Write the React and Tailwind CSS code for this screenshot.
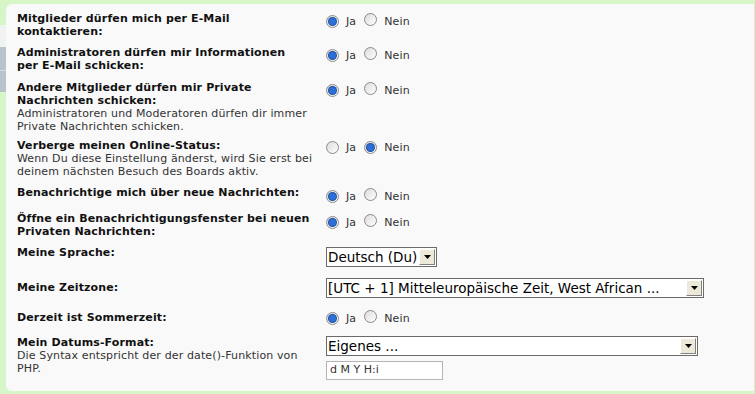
import React from 'react';

const font = { fontFamily: '"DejaVu Sans", Verdana, sans-serif' };

function Radio({ checked }) {
  return (
    <span className="relative inline-flex h-[13px] w-[13px] items-center justify-center rounded-full border border-[#8a8a8a] bg-gradient-to-br from-[#dcdcdc] to-[#ffffff]">
      {checked && <span className="h-[7px] w-[7px] rounded-full bg-[#2c6fd8] ring-1 ring-[#1d4f9e]" />}
    </span>
  );
}

function YesNo({ yes }) {
  return (
    <div className="flex items-center text-[11px] leading-[13px] tracking-[0.13px] text-[#333]">
      <Radio checked={yes} />
      <span className="ml-[7px]">Ja</span>
      <span className="ml-[8px]"><Radio checked={!yes} /></span>
      <span className="ml-[7px]">Nein</span>
    </div>
  );
}

function Select({ value, width }) {
  return (
    <div className={`flex h-[20px] items-center border border-[#6b6b6b] bg-white ${width}`}>
      <span className="flex-1 truncate pl-[1px] text-[13.5px] leading-[16px] text-black">{value}</span>
      <span className="mr-[1px] flex h-[16px] w-[16px] items-center justify-center border border-t-white border-l-white border-r-[#808080] border-b-[#808080] bg-[#ece9d8]">
        <svg width="7" height="4" viewBox="0 0 7 4"><path d="M0 0h7L3.5 4z" fill="#000" /></svg>
      </span>
    </div>
  );
}

const rows = [
  { h: 'h-[34px]', label: ['Mitglieder dürfen mich per E-Mail', 'kontaktieren:'], right: <YesNo yes />, mt: 'mt-[1px]' },
  { h: 'h-[35px]', label: ['Administratoren dürfen mir Informationen', 'per E-Mail schicken:'], right: <YesNo yes />, mt: 'mt-[1px]' },
  {
    h: 'h-[58px]',
    label: ['Andere Mitglieder dürfen mir Private', 'Nachrichten schicken:'],
    desc: ['Administratoren und Moderatoren dürfen dir immer', 'Private Nachrichten schicken.'],
    right: <YesNo yes />,
    mt: 'mt-[1px]',
  },
  {
    h: 'h-[47px]',
    label: ['Verberge meinen Online-Status:'],
    desc: ['Wenn Du diese Einstellung änderst, wird Sie erst bei', 'deinem nächsten Besuch des Boards aktiv.'],
    right: <YesNo yes={false} />,
    mt: 'mt-[2px]',
  },
  { h: 'h-[26px]', label: ['Benachrichtige mich über neue Nachrichten:'], right: <YesNo yes />, mt: 'mt-[2px]' },
  { h: 'h-[34px]', label: ['Öffne ein Benachrichtigungsfenster bei neuen', 'Privaten Nachrichten:'], right: <YesNo yes />, mt: 'mt-[2px]' },
  { h: 'h-[35px]', label: ['Meine Sprache:'], right: <Select value="Deutsch (Du)" width="w-[111px]" />, mt: 'mt-[1px]' },
  {
    h: 'h-[30px]',
    label: ['Meine Zeitzone:'],
    right: <Select value="[UTC + 1] Mitteleuropäische Zeit, West African ..." width="w-[378px]" />,
    mt: '-mt-[3px]',
  },
  { h: 'h-[25px]', label: ['Derzeit ist Sommerzeit:'], right: <YesNo yes />, mt: '-mt-[1px]' },
  {
    h: 'h-[52px]',
    label: ['Mein Datums-Format:'],
    desc: ['Die Syntax entspricht der der date()-Funktion von', 'PHP.'],
    right: (
      <div className="flex flex-col gap-[5px]">
        <Select value="Eigenes ..." width="w-[372px]" />
        <div className="flex h-[19px] w-[117px] items-center border border-[#b5b5b5] bg-white pl-[3px] text-[11px] text-[#333]">
          d M Y H:i
        </div>
      </div>
    ),
    mt: 'mt-[0px]',
  },
];

export default function App() {
  return (
    <div className="flex h-[394px] w-[755px] overflow-hidden bg-[#d7f6c7]" style={font}>
      <div className="flex w-[6px] shrink-0 flex-col pt-[25px]">
        <div className="h-[22px] bg-[#f1f3f1]" />
        <div className="h-[23px] bg-[#b7c4cc]" />
        <div className="h-[1px] bg-[#d4dcd9]" />
        <div className="h-[21px] bg-[#b7c4cc]" />
      </div>
      <div className="mt-[4px] mb-[3px] mr-[1px] flex-1 rounded-l-[6px] bg-[#f9f9f9] pt-[8px] pl-[11px]">
        {rows.map((row, i) => (
          <div key={i} className={`flex ${row.h}`}>
            <div className="w-[309px] shrink-0 text-[11px] leading-[13px] tracking-[0.13px]">
              {row.label.map((l) => (
                <div key={l} className="font-bold text-[#111]">{l}</div>
              ))}
              {row.desc && row.desc.map((l) => (
                <div key={l} className="text-[#333]">{l}</div>
              ))}
            </div>
            <div className={row.mt}>{row.right}</div>
          </div>
        ))}
      </div>
    </div>
  );
}
